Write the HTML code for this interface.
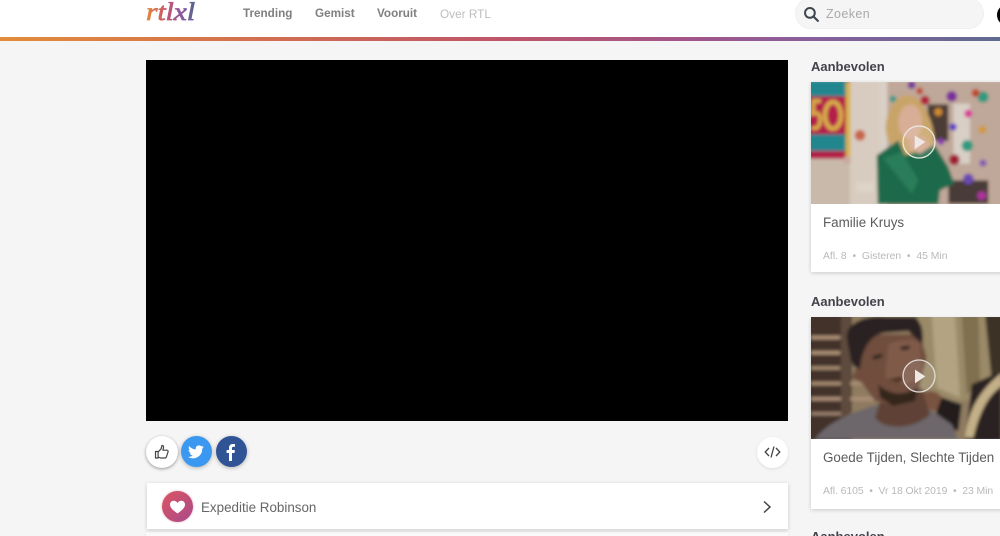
<!DOCTYPE html>
<html lang="nl">
<head>
<meta charset="utf-8">
<title>RTL XL</title>
<style>
html,body{margin:0;padding:0;width:1000px;height:536px;overflow:hidden;background:#f5f5f5;font-family:"Liberation Sans",sans-serif}
*{box-sizing:border-box}
#page{position:relative;width:1000px;height:536px;overflow:hidden;background:#f5f5f5}
.a{position:absolute;white-space:nowrap}
#hdr{left:0;top:0;width:1000px;height:38px;background:#fff}
#bar{left:0;top:37px;width:1000px;height:4px;background:linear-gradient(90deg,#e28c3a 0,#d4704f 25%,#bf5569 50%,#a0558c 70%,#86609c 82%,#5f6b8f 100%)}
.nav{top:7px;font-size:11.7px;line-height:14px;font-weight:bold;color:#7f7f7f}
#search{left:795px;top:-2px;width:189px;height:31px;border-radius:16px;background:#f5f5f5;border:1px solid #efefef}
#zoek{left:826px;top:7px;font-size:12.5px;line-height:15px;color:#a9a9a9;letter-spacing:.4px}
#ava{left:997px;top:4px;width:22px;height:22px;border-radius:50%;background:#000}
#video{left:146px;top:60px;width:642px;height:361px;background:#000}
.btn{border-radius:50%;box-shadow:0 1px 4px rgba(0,0,0,.28)}
.card{background:#fff;box-shadow:0 1px 4px rgba(0,0,0,.18)}
.h{left:811px;font-size:13px;line-height:16px;font-weight:bold;color:#43434b}
.t{left:823px;font-size:13.4px;line-height:16px;color:#5c5c5c}
.m{left:823px;font-size:10.4px;line-height:13px;color:#b9b9b9}
</style>
</head>
<body>
<div id="page">
<div class="a" id="hdr"></div>
<svg class="a" style="left:140px;top:0" width="70" height="30" viewBox="0 0 70 30">
<defs><linearGradient id="lg" x1="0" x2="1" y1="0" y2="0"><stop offset="0" stop-color="#e48a3a"/><stop offset=".4" stop-color="#c8566a"/><stop offset=".72" stop-color="#8c58a0"/><stop offset="1" stop-color="#56658c"/></linearGradient></defs>
<text x="6" y="20" font-family="Liberation Serif,serif" font-style="italic" font-size="25" fill="url(#lg)" stroke="url(#lg)" stroke-width=".7" textLength="49" lengthAdjust="spacingAndGlyphs">rtlxl</text>
</svg>
<div class="a nav" style="left:243px">Trending</div>
<div class="a nav" style="left:315px">Gemist</div>
<div class="a nav" style="left:377px">Vooruit</div>
<div class="a nav" style="left:440px;color:#bdbdbd;font-weight:normal;font-size:11.8px">Over RTL</div>
<div class="a" id="search"></div>
<svg class="a" style="left:803px;top:6px" width="17" height="17" viewBox="0 0 16 16"><circle cx="6.5" cy="6.5" r="4.6" fill="none" stroke="#3f4650" stroke-width="1.9"/><path d="M10 10l4 4" stroke="#3f4650" stroke-width="2" stroke-linecap="round"/></svg>
<div class="a" id="zoek">Zoeken</div>
<div class="a" id="ava"></div>
<div class="a" id="bar"></div>

<div class="a" id="video"></div>

<div class="a btn" style="left:146px;top:436px;width:32px;height:32px;background:#fff;box-shadow:0 1px 3px rgba(0,0,0,.4)"></div>
<svg class="a" style="left:154px;top:444px" width="16" height="16" viewBox="0 0 16 16"><path d="M1.500 7.500h2.600v6.500H1.500zM4.100 8l3-3.200.8-3.300c1.400-.2 2 1.100 1.500 2.700L8.900 6.200h4c1 0 1.500 1 1.100 1.800l-1.600 5c-.3.700-.8 1-1.500 1H6.500L4.100 13" fill="none" stroke="#444" stroke-width="1.200" stroke-linejoin="round"/></svg>
<div class="a btn" style="left:181px;top:436px;width:31px;height:31px;background:#3a98f0"></div>
<svg class="a" style="left:187px;top:443px" width="18" height="17" viewBox="0 0 24 24"><path fill="#fff" d="M23 5.500c-.8.400-1.700.6-2.600.7.900-.6 1.700-1.400 2-2.500-.9.500-1.900.9-2.900 1.100A4.600 4.600 0 0 0 11.700 9 13 13 0 0 1 2.300 4.200a4.600 4.600 0 0 0 1.400 6.100c-.7 0-1.400-.2-2.100-.6 0 2.200 1.600 4.100 3.700 4.600-.7.200-1.400.2-2.100.1.600 1.800 2.300 3.100 4.300 3.200A9.300 9.300 0 0 1 .7 19.500 13 13 0 0 0 20.800 8c.9-.6 1.600-1.500 2.200-2.500z"/></svg>
<div class="a btn" style="left:216px;top:436px;width:31px;height:31px;background:#2f5395"></div>
<svg class="a" style="left:226px;top:443px" width="11" height="18" viewBox="0 0 11 18"><path fill="#fff" d="M3 18V10H.6V7H3V5c0-2.600 1.500-4 3.800-4 1 0 1.900.1 2.200.1v2.700H7.500c-1.200 0-1.500.6-1.500 1.500V7h2.900l-.4 3H6v8z"/></svg>
<div class="a btn" style="left:757px;top:437px;width:31px;height:31px;background:#fff;box-shadow:0 1px 3px rgba(0,0,0,.1)"></div>
<svg class="a" style="left:764px;top:445px" width="17" height="14" viewBox="0 0 17 14"><path d="M5 3L1.200 7 5 11M12 3l3.800 4L12 11M10 1.500L7 12.500" fill="none" stroke="#444" stroke-width="1.300"/></svg>

<div class="a" style="left:146px;top:532px;width:642px;height:10px;background:#fafafa;box-shadow:0 0 2px rgba(0,0,0,.08)"></div>
<div class="a card" style="left:147px;top:483px;width:641px;height:46px"></div>
<div class="a" style="left:162px;top:491px;width:31px;height:31px;border-radius:50%;background:linear-gradient(135deg,#dc5560,#a84a8c);box-shadow:0 0 2px rgba(200,70,110,.5)"></div>
<svg class="a" style="left:169px;top:499px" width="17" height="16" viewBox="0 0 17 16"><path fill="#fff" d="M8.500 14.500C3 10.500 1 8.300 1 5.500 1 3.300 2.700 1.800 4.700 1.800c1.600 0 2.900.8 3.800 2.200.9-1.400 2.200-2.200 3.800-2.200 2 0 3.700 1.500 3.700 3.700 0 2.800-2 5-7.500 9z"/></svg>
<div class="a" style="left:201px;top:500px;font-size:13.4px;line-height:16px;color:#666">Expeditie Robinson</div>
<svg class="a" style="left:761px;top:500px" width="12" height="14" viewBox="0 0 12 14"><path d="M3 1.500L9 7l-6 5.500" fill="none" stroke="#444" stroke-width="1.500"/></svg>

<div class="a h" style="top:59px">Aanbevolen</div>
<div class="a card" style="left:811px;top:82px;width:195px;height:190px"></div>
<svg class="a" style="left:811px;top:82px" width="189" height="122" viewBox="18 5 567 366">
<defs><filter id="b" x="-10%" y="-10%" width="120%" height="120%"><feGaussianBlur stdDeviation="5"/></filter></defs>
<g filter="url(#b)">
<rect x="0" y="0" width="600" height="380" fill="#bfa799"/>
<rect x="0" y="235" width="140" height="150" fill="#c9b9ab"/>
<rect x="135" y="0" width="90" height="380" fill="#d8ccc0"/>
<rect x="225" y="0" width="22" height="380" fill="#d9d0c6"/>
<rect x="0" y="0" width="135" height="235" fill="#b41f48"/>
<rect x="0" y="0" width="125" height="48" fill="#23868f"/>
<rect x="0" y="162" width="125" height="50" fill="#23868f"/>
<rect x="122" y="5" width="14" height="230" fill="#d9b24a"/>
<path d="M48 62H26L24 100C45 92 50 115 42 135C35 148 25 145 20 140" fill="none" stroke="#d8ac4a" stroke-width="12"/>
<ellipse cx="84" cy="105" rx="24" ry="40" fill="none" stroke="#d8ac4a" stroke-width="14"/>
<rect x="445" y="70" width="50" height="180" fill="#d8cfc6"/>
<rect x="368" y="72" width="62" height="110" fill="#4c3c34"/>
<rect x="430" y="300" width="120" height="70" fill="#4a3a38"/>
<circle cx="320" cy="14" r="12" fill="#7a3a9a"/><circle cx="344" cy="32" r="10" fill="#c0442a"/><circle cx="360" cy="60" r="14" fill="#b0243a"/><circle cx="440" cy="48" r="16" fill="#7a2f9a"/><circle cx="264" cy="56" r="10" fill="#2f9a8c"/><circle cx="400" cy="95" r="12" fill="#d08a30"/><circle cx="490" cy="100" r="12" fill="#d83a9a"/><circle cx="444" cy="140" r="11" fill="#5a3ac0"/><circle cx="532" cy="148" r="12" fill="#d09a3a"/><circle cx="487" cy="196" r="17" fill="#2f9a80"/><circle cx="448" cy="238" r="16" fill="#a01f34"/><circle cx="534" cy="248" r="11" fill="#8a5ab0"/><circle cx="490" cy="296" r="16" fill="#6a4ab0"/><circle cx="530" cy="346" r="13" fill="#b030a0"/><circle cx="534" cy="50" r="17" fill="#2f9a80"/><circle cx="512" cy="38" r="12" fill="#c0442a"/><circle cx="165" cy="165" r="16" fill="#c8654a"/><circle cx="126" cy="240" r="12" fill="#c9a9a0"/><circle cx="408" cy="184" r="10" fill="#8a3ab0"/>
<rect x="156" y="306" width="50" height="28" fill="#ddd4c8"/>
<path d="M270 195C235 185 235 120 258 85C270 40 325 30 350 70C375 100 392 160 388 195L340 225L285 225Z" fill="#c9a468"/>
<ellipse cx="316" cy="125" rx="36" ry="52" fill="#d8ae96"/>
<path d="M215 225L280 180L300 225L390 195L430 260L448 310L405 330L400 372H218Z" fill="#1f6b4c"/>
<path d="M235 235L320 340L340 300L290 215Z" fill="#2a7d5a"/>
<path d="M310 170h50l15 30-30 20-30-15z" fill="#d6a890"/>
</g>
<circle cx="342" cy="185" r="48" fill="rgba(255,255,255,.12)" stroke="#e8e8e0" stroke-width="4"/>
<path d="M329 165L361 185L329 207Z" fill="#f0e8e4"/>
</svg>
<div class="a t" style="top:215px">Familie Kruys</div>
<div class="a m" style="top:250px">Afl. 8&nbsp; •&nbsp; Gisteren&nbsp; •&nbsp; 45 Min</div>

<div class="a h" style="top:294px">Aanbevolen</div>
<div class="a card" style="left:811px;top:318px;width:195px;height:191px"></div>
<svg class="a" style="left:811px;top:317px" width="189" height="122" viewBox="18 8 567 366">
<g filter="url(#b)">
<rect x="0" y="0" width="600" height="380" fill="#8f7c60"/>
<rect x="0" y="0" width="140" height="380" fill="#43332a"/>
<rect x="18" y="64" width="88" height="11" fill="#b09478"/><rect x="18" y="110" width="88" height="11" fill="#b09478"/><rect x="18" y="156" width="88" height="10" fill="#a98d72"/><rect x="18" y="202" width="155" height="11" fill="#a98d72"/><rect x="18" y="248" width="190" height="11" fill="#ad9078"/><rect x="18" y="293" width="120" height="10" fill="#9d8270"/>
<rect x="108" y="0" width="28" height="320" fill="#5f4c3e"/>
<rect x="340" y="0" width="250" height="260" fill="#9a8a68"/>
<path d="M380 0h70l15 250-70-30z" fill="#b2a382"/>
<path d="M470 0h50l5 200-40 40z" fill="#7f6f50"/>
<path d="M540 0h60v200h-40z" fill="#3e3026"/>
<path d="M400 245L470 270L460 350L390 330Z" fill="#201a1c"/>
<path d="M500 210L590 170V380H480Z" fill="#2a2020"/>
<path d="M480 370C490 300 510 240 590 175V215C540 250 520 310 505 370Z" fill="#c4b088"/>
<path d="M350 235C375 225 400 230 410 250L395 290L350 280Z" fill="#7a5240"/>
<path d="M30 374C70 320 150 290 220 270L375 285L440 330L460 374Z" fill="#6d666a"/>
<path d="M225 260L210 310C240 350 330 345 375 300L350 220Z" fill="#5f4234"/>
<path d="M155 160L140 190L170 205L210 260L280 275L340 230L365 130L345 60L180 60Z" fill="#6f4e3e"/>
<path d="M220 210C250 240 300 250 340 215L330 260L265 275L225 250Z" fill="#35261f"/>
<path d="M250 90C280 75 330 70 345 85L350 190L300 210L240 190Z" fill="#7f5a48"/>
<path d="M125 70C120 30 180 0 240 8L330 8C355 30 355 60 352 90L310 50L240 55C200 60 170 100 165 165L145 155C135 130 130 100 125 70Z" fill="#2a2422"/>
<path d="M200 128l28-10 6 8-26 10zM285 98l28-4 2 9-24 5z" fill="#281e1c"/>
<path d="M250 195l36-8 12 8-20 10z" fill="#4f342a"/>
</g>
<circle cx="342" cy="185" r="48" fill="rgba(255,255,255,.1)" stroke="#e0dcd6" stroke-width="4"/>
<path d="M330 166L361 186L330 207Z" fill="#efe8e4"/>
</svg>
<div class="a t" style="top:450px">Goede Tijden, Slechte Tijden</div>
<div class="a m" style="top:485px;letter-spacing:-.05px">Afl. 6105&nbsp; •&nbsp; Vr 18 Okt 2019&nbsp; •&nbsp; 23 Min</div>

<div class="a h" style="top:529px">Aanbevolen</div>
</div>
</body>
</html>
